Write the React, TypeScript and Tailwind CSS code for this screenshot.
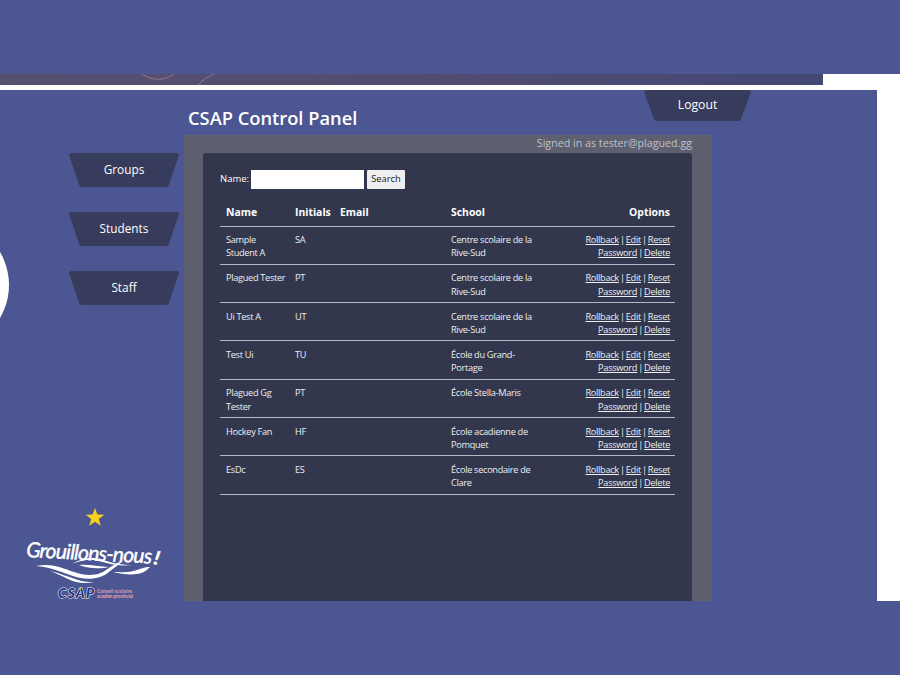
const font = { fontFamily: '"Open Sans", "Noto Sans", sans-serif' };

const rows = [
  ['Sample Student\u00a0A', 'SA', 'Centre scolaire de la Rive-Sud'],
  ['Plagued Tester', 'PT', 'Centre scolaire de la Rive-Sud'],
  ['Ui Test A', 'UT', 'Centre scolaire de la Rive-Sud'],
  ['Test Ui', 'TU', 'École du Grand-Portage'],
  ['Plagued Gg Tester', 'PT', 'École Stella-Maris'],
  ['Hockey Fan', 'HF', 'École acadienne de Pomquet'],
  ['EsDc', 'ES', 'École secondaire de Clare'],
];

const trapezoid =
  'bg-[#383c5c] text-white flex items-center justify-center [clip-path:polygon(1.5%_0,98.5%_0,100%_6%,90.5%_96%,89%_100%,11%_100%,9.5%_96%,0_6%)]';

function NavButton({ label }: { label: string }) {
  return <a className={`${trapezoid} w-[110px] h-[34px] text-[11.8px]`}>{label}</a>;
}

function Logo() {
  return (
    <svg width="150" height="96" viewBox="0 0 150 96" className="ml-[19px]">
      <polygon
        points="76,3 78.4,9.6 85.2,9.8 79.8,14 81.8,20.8 76,16.8 70.2,20.8 72.2,14 66.8,9.8 73.6,9.6"
        fill="#f6d21c"
      />
      <text
        x="7"
        y="52"
        fill="#fff"
        stroke="#fff"
        strokeWidth="0.4"
        fontFamily="Lato, sans-serif"
        fontStyle="italic"
        fontSize="21"
        textLength="126"
        transform="rotate(3 7 52)"
      >
        Grouillons-nous
      </text>
      <text x="134" y="59" fill="#fff" stroke="#fff" strokeWidth="0.6" fontFamily="Lato, sans-serif" fontStyle="italic" fontWeight="700" fontSize="19" transform="rotate(12 134 59)">
        !
      </text>
      <g fill="#fff">
        <path d="M52 59c7-3 13-6 20-6 12 0 20 7 42 7-20 2-26-3-40-5-8-1-14 2-22 4z" />
        <path d="M17 61c14-3 24 1 38 6 14 5 26 3 32-2 6-4 12-8 17-9-4 3-9 7-14 11-8 7-22 9-36 4-14-5-24-9-37-10z" />
        <path d="M31 66c10 2 18 6 28 9 6 2 12 2 16 2-10 2-18 1-26-3-6-3-12-6-18-8z" />
        <path d="M94 67c10 0 16 1 24-2 4-1 7-3 13-3-3 3-6 6-13 7-8 1-16 0-24-2z" />
        <path d="M60 60c10-1 20 2 30 2-8 2-20 2-30-2z" />
      </g>
      <text
        x="39"
        y="93"
        fill="#24357f"
        stroke="#fff"
        strokeWidth="1"
        paintOrder="stroke"
        fontFamily="Lato, sans-serif"
        fontStyle="italic"
        fontWeight="900"
        fontSize="13.5"
        textLength="36"
      >
        CSAP
      </text>
      <circle cx="61" cy="84" r="1" fill="#f6d21c" />
      <text x="78" y="88" fill="#eba3ac" fontFamily="Lato, sans-serif" fontSize="4.6" fontWeight="700" textLength="35">
        Conseil scolaire
      </text>
      <text x="78" y="92.5" fill="#eba3ac" fontFamily="Lato, sans-serif" fontSize="4.6" fontWeight="700" textLength="36">
        acadien provincial
      </text>
    </svg>
  );
}

function BannerStrip() {
  return (
    <div className="w-[823px] h-[11px] bg-gradient-to-r from-[#56506f] via-[#534c70] to-[#434874] overflow-hidden">
      <svg width="823" height="11" viewBox="0 0 823 11">
        <path d="M142 0c10 7 22 7 32 0" fill="none" stroke="#94758f" strokeWidth="1" />
        <path d="M198 11c4-5 10-8 16-11" fill="none" stroke="#94758f" strokeWidth="1" />
      </svg>
    </div>
  );
}

export default function App() {
  return (
    <div className="relative w-[900px] h-[675px] bg-white overflow-hidden" style={font}>
      <div className="h-[74px] bg-[#4c5693]" />
      <BannerStrip />
      <div className="h-[5px]" />

      <div className="w-[877px] h-[511px] bg-[#4c5693] flex">
        {/* Sidebar */}
        <div className="w-[184px] shrink-0 flex flex-col">
          <div className="pt-[63px] pl-[69px] flex flex-col gap-[25px]">
            <NavButton label="Groups" />
            <NavButton label="Students" />
            <NavButton label="Staff" />
          </div>
          <div className="mt-auto">
            <Logo />
          </div>
        </div>

        {/* Main column */}
        <div className="w-[528px] shrink-0 flex flex-col">
          <div className="w-[567px] h-[45px] flex justify-between items-start">
            <h1 className="pl-[4px] pt-[15px] text-[18.3px] leading-[26px] font-semibold text-white">CSAP Control Panel</h1>
            <a className={`${trapezoid} w-[107px] h-[31px] text-[12.2px]`}>Logout</a>
          </div>

          <div className="flex-1 bg-[#5e606f] pl-[19px] pr-[20px] flex flex-col min-h-0">
            <div className="h-[18px] text-right text-[10.7px] leading-[17px] text-[#bfc1c9]">Signed in as tester@plagued.gg</div>
            <div className="flex-1 bg-[#33374d] rounded-t-[3px] px-[17px] text-white text-[9.2px] leading-[13.35px] tracking-[-0.3px]">
              <div className="flex items-center h-[20px] mt-[16px] text-[9.5px] tracking-normal">
                <label className="w-[29px]">Name:</label>
                <input className="ml-[2px] w-[113px] h-[19px] bg-white" />
                <button className="ml-[3px] w-[38px] h-[19px] bg-[#efefef] text-[#222] text-[9.4px] rounded-[1px]">Search</button>
              </div>

              <table className="mt-[11px] w-[455px] table-fixed border-collapse">
                <thead>
                  <tr className="border-b border-[#b4b7c4] h-[26px] text-[10.4px] tracking-normal">
                    <th className="w-[69px] pl-[6px] text-left font-bold">Name</th>
                    <th className="w-[45px] pl-[6px] text-left font-bold">Initials</th>
                    <th className="w-[111px] pl-[6px] text-left font-bold">Email</th>
                    <th className="w-[92px] pl-[6px] text-left font-bold">School</th>
                    <th className="pr-[5px] text-right font-bold">Options</th>
                  </tr>
                </thead>
                <tbody>
                  {rows.map((r, i) => (
                    <tr key={i} className="border-b border-[#b4b7c4] align-top text-[#eceef2]">
                      <td className="pl-[6px] pt-[6.5px] pb-[4.15px]">{r[0]}</td>
                      <td className="pl-[6px] pt-[6.5px] pb-[4.15px]">{r[1]}</td>
                      <td className="pl-[6px] pt-[6.5px] pb-[4.15px]"></td>
                      <td className="pl-[6px] pt-[6.5px] pb-[4.15px]">{r[2]}</td>
                      <td className="pl-[18px] pr-[5px] pt-[6.5px] pb-[4.15px] text-right [word-spacing:-1px]">
                        <a className="underline">Rollback</a> | <a className="underline">Edit</a> | <a className="underline">Reset</a> <a className="underline">Password</a> | <a className="underline">Delete</a>
                      </td>
                    </tr>
                  ))}
                </tbody>
              </table>
            </div>
          </div>
        </div>
      </div>

      <div className="h-[74px] bg-[#4c5693]" />

      {/* white disc peeking in from the left edge */}
      <div className="absolute left-[-121px] top-[220px] w-[130px] h-[130px] rounded-full bg-white" />
    </div>
  );
}
